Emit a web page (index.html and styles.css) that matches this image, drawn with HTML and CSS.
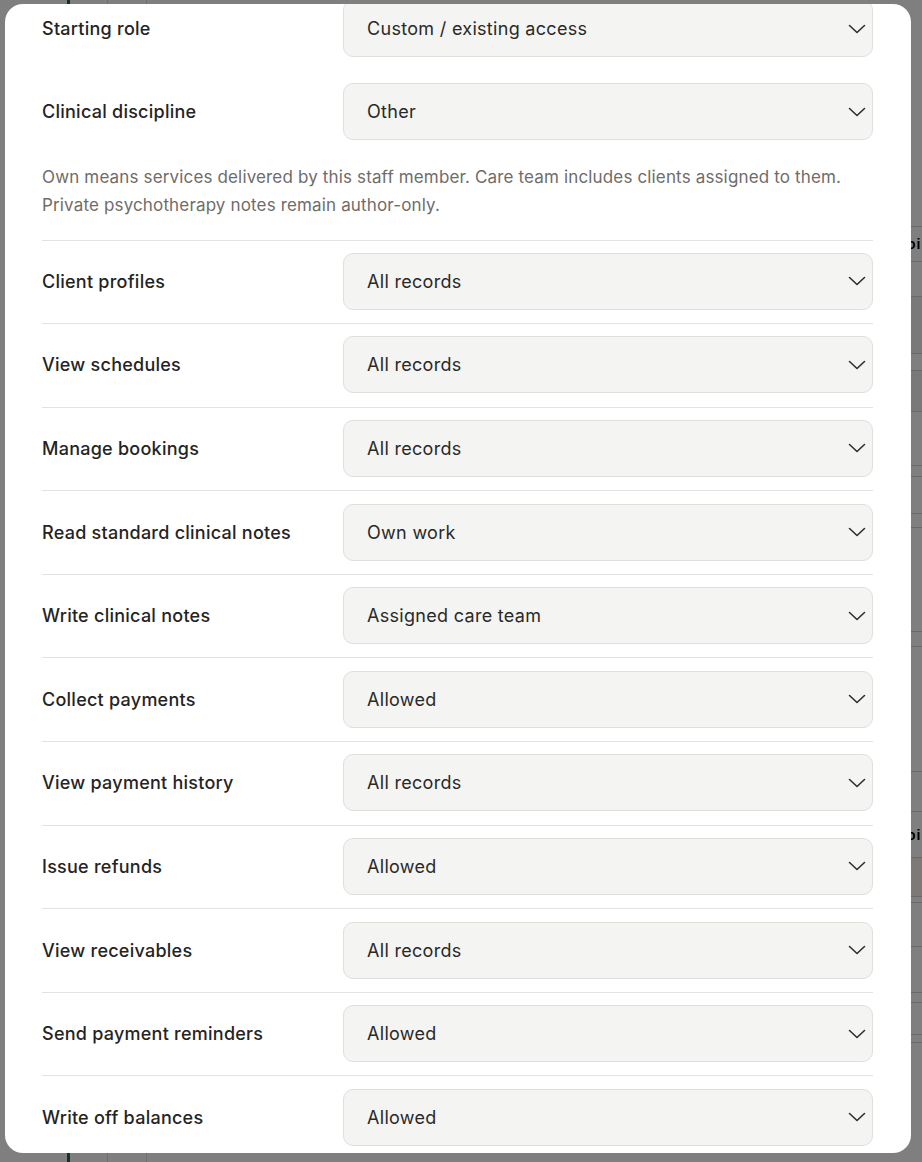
FILE: index.html
```html
<!DOCTYPE html>
<html lang="en">
<head>
<meta charset="utf-8">
<title>Staff access</title>
<link rel="stylesheet" href="styles.css">
</head>
<body>
<div class="page">
  <div class="page-cols">
    <div class="col col-a"></div>
    <div class="col col-green"></div>
    <div class="col col-b"></div>
    <div class="col col-c"></div>
    <div class="col col-main"></div>
  </div>
  <div class="page-right">
    <div class="pr-row" style="height:227px"></div>
    <div class="pr-row pr-text" style="height:35px"><span>oi</span></div>
    <div class="pr-row" style="height:35px"></div>
    <div class="pr-row pr-dark" style="height:57px"></div>
    <div class="pr-row" style="height:17px"></div>
    <div class="pr-row pr-dark" style="height:41px"></div>
    <div class="pr-row" style="height:54px"></div>
    <div class="pr-row" style="height:11px"></div>
    <div class="pr-row" style="height:37px"></div>
    <div class="pr-row" style="height:14px"></div>
    <div class="pr-row" style="height:104px"></div>
    <div class="pr-row" style="height:15px"></div>
    <div class="pr-row" style="height:125px"></div>
    <div class="pr-row" style="height:40px"></div>
    <div class="pr-row pr-text" style="height:46px"><span>oi</span></div>
    <div class="pr-row pr-red" style="height:39px"></div>
    <div class="pr-row" style="height:6px"></div>
    <div class="pr-row" style="height:44px"></div>
    <div class="pr-row" style="height:46px"></div>
    <div class="pr-row" style="height:10px"></div>
    <div class="pr-row" style="height:32px"></div>
    <div class="pr-row" style="height:8px"></div>
  </div>
</div>
<div class="overlay"></div>

<div class="modal">
  <div class="modal-body">
    <div class="field">
      <label class="label">Starting role</label>
      <div class="select"><span>Custom / existing access</span><svg class="chev" viewBox="0 0 18 10"><path d="M1.5 1.5 L9 8.5 L16.5 1.5"/></svg></div>
    </div>
    <div class="field">
      <label class="label">Clinical discipline</label>
      <div class="select"><span>Other</span><svg class="chev" viewBox="0 0 18 10"><path d="M1.5 1.5 L9 8.5 L16.5 1.5"/></svg></div>
    </div>
    <p class="help">Own means services delivered by this staff member. Care team includes clients assigned to them. Private psychotherapy notes remain author-only.</p>

    <div class="perms">
      <div class="perm">
        <label class="label">Client profiles</label>
        <div class="select"><span>All records</span><svg class="chev" viewBox="0 0 18 10"><path d="M1.5 1.5 L9 8.5 L16.5 1.5"/></svg></div>
      </div>
      <div class="perm">
        <label class="label">View schedules</label>
        <div class="select"><span>All records</span><svg class="chev" viewBox="0 0 18 10"><path d="M1.5 1.5 L9 8.5 L16.5 1.5"/></svg></div>
      </div>
      <div class="perm">
        <label class="label">Manage bookings</label>
        <div class="select"><span>All records</span><svg class="chev" viewBox="0 0 18 10"><path d="M1.5 1.5 L9 8.5 L16.5 1.5"/></svg></div>
      </div>
      <div class="perm">
        <label class="label">Read standard clinical notes</label>
        <div class="select"><span>Own work</span><svg class="chev" viewBox="0 0 18 10"><path d="M1.5 1.5 L9 8.5 L16.5 1.5"/></svg></div>
      </div>
      <div class="perm">
        <label class="label">Write clinical notes</label>
        <div class="select"><span>Assigned care team</span><svg class="chev" viewBox="0 0 18 10"><path d="M1.5 1.5 L9 8.5 L16.5 1.5"/></svg></div>
      </div>
      <div class="perm">
        <label class="label">Collect payments</label>
        <div class="select"><span>Allowed</span><svg class="chev" viewBox="0 0 18 10"><path d="M1.5 1.5 L9 8.5 L16.5 1.5"/></svg></div>
      </div>
      <div class="perm">
        <label class="label">View payment history</label>
        <div class="select"><span>All records</span><svg class="chev" viewBox="0 0 18 10"><path d="M1.5 1.5 L9 8.5 L16.5 1.5"/></svg></div>
      </div>
      <div class="perm">
        <label class="label">Issue refunds</label>
        <div class="select"><span>Allowed</span><svg class="chev" viewBox="0 0 18 10"><path d="M1.5 1.5 L9 8.5 L16.5 1.5"/></svg></div>
      </div>
      <div class="perm">
        <label class="label">View receivables</label>
        <div class="select"><span>All records</span><svg class="chev" viewBox="0 0 18 10"><path d="M1.5 1.5 L9 8.5 L16.5 1.5"/></svg></div>
      </div>
      <div class="perm">
        <label class="label">Send payment reminders</label>
        <div class="select"><span>Allowed</span><svg class="chev" viewBox="0 0 18 10"><path d="M1.5 1.5 L9 8.5 L16.5 1.5"/></svg></div>
      </div>
      <div class="perm">
        <label class="label">Write off balances</label>
        <div class="select"><span>Allowed</span><svg class="chev" viewBox="0 0 18 10"><path d="M1.5 1.5 L9 8.5 L16.5 1.5"/></svg></div>
      </div>
    </div>
  </div>
</div>
</body>
</html>
```

FILE: styles.css
```css
* { box-sizing: border-box; }
html, body {
  margin: 0;
  padding: 0;
  width: 922px;
  height: 1162px;
  overflow: hidden;
}
body {
  position: relative;
  font-family: Inter, "Noto Sans", "Liberation Sans", sans-serif;
  background: #ffffff;
}

/* underlying page (seen through the overlay) */
.page {
  position: absolute;
  inset: 0;
  display: flex;
  justify-content: space-between;
  background: #ffffff;
}
.page-cols {
  display: flex;
  height: 100%;
}
.col { height: 100%; }
.col-a { width: 67px; }
.col-green { width: 3px; background: #1c6b4f; }
.col-b { width: 38px; border-right: 1px solid #dedede; }
.col-c { width: 39px; border-right: 1px solid #dedede; }
.page-right {
  width: 11px;
  display: flex;
  flex-direction: column;
}
.pr-row {
  border-bottom: 1px solid #d2d2d2;
  flex: none;
  overflow: hidden;
  font: 700 14px "Liberation Sans", sans-serif;
  color: #000;
}
.pr-dark { background: #f2f2f2; }
.pr-red { background: #fbf2ee; }
.pr-text { display: flex; align-items: center; }
.pr-text span { margin-left: -4px; letter-spacing: 1px; }

.overlay {
  position: absolute;
  inset: 0;
  background: rgba(0, 0, 0, 0.5);
}

/* modal */
.modal {
  position: absolute;
  left: 5px;
  top: 4px;
  width: 906px;
  height: 1149px;
  background: #ffffff;
  border-radius: 18px;
  overflow: hidden;
}
.modal-body {
  margin-top: -4px;
  padding: 0 38px 0 37px;
}

.field {
  display: grid;
  grid-template-columns: 301px 1fr;
  align-items: center;
}
.field + .field { margin-top: 26px; }

.label {
  font-size: 18px;
  font-weight: 500;
  color: #252423;
  letter-spacing: 0.25px;
}

.select {
  height: 57px;
  border: 1.5px solid #e1dfdc;
  border-radius: 10px;
  background: #f4f4f2;
  display: flex;
  align-items: center;
  justify-content: space-between;
  padding: 0 6px 0 23px;
  font-size: 18px;
  font-weight: 400;
  color: #2a2928;
  letter-spacing: 0.3px;
}
.chev {
  width: 18px;
  height: 10px;
  fill: none;
  stroke: #2f2e2d;
  stroke-width: 1.6;
  stroke-linecap: round;
  stroke-linejoin: round;
}

.help {
  margin: 23px 0 20.5px 0;
  font-size: 17px;
  line-height: 28px;
  color: #6f6c69;
  letter-spacing: 0.15px;
}

.perm {
  display: grid;
  grid-template-columns: 301px 1fr;
  align-items: center;
  border-top: 1px solid #e4e3e1;
  padding: 12.3px 0 13.3px 0;
}
```
